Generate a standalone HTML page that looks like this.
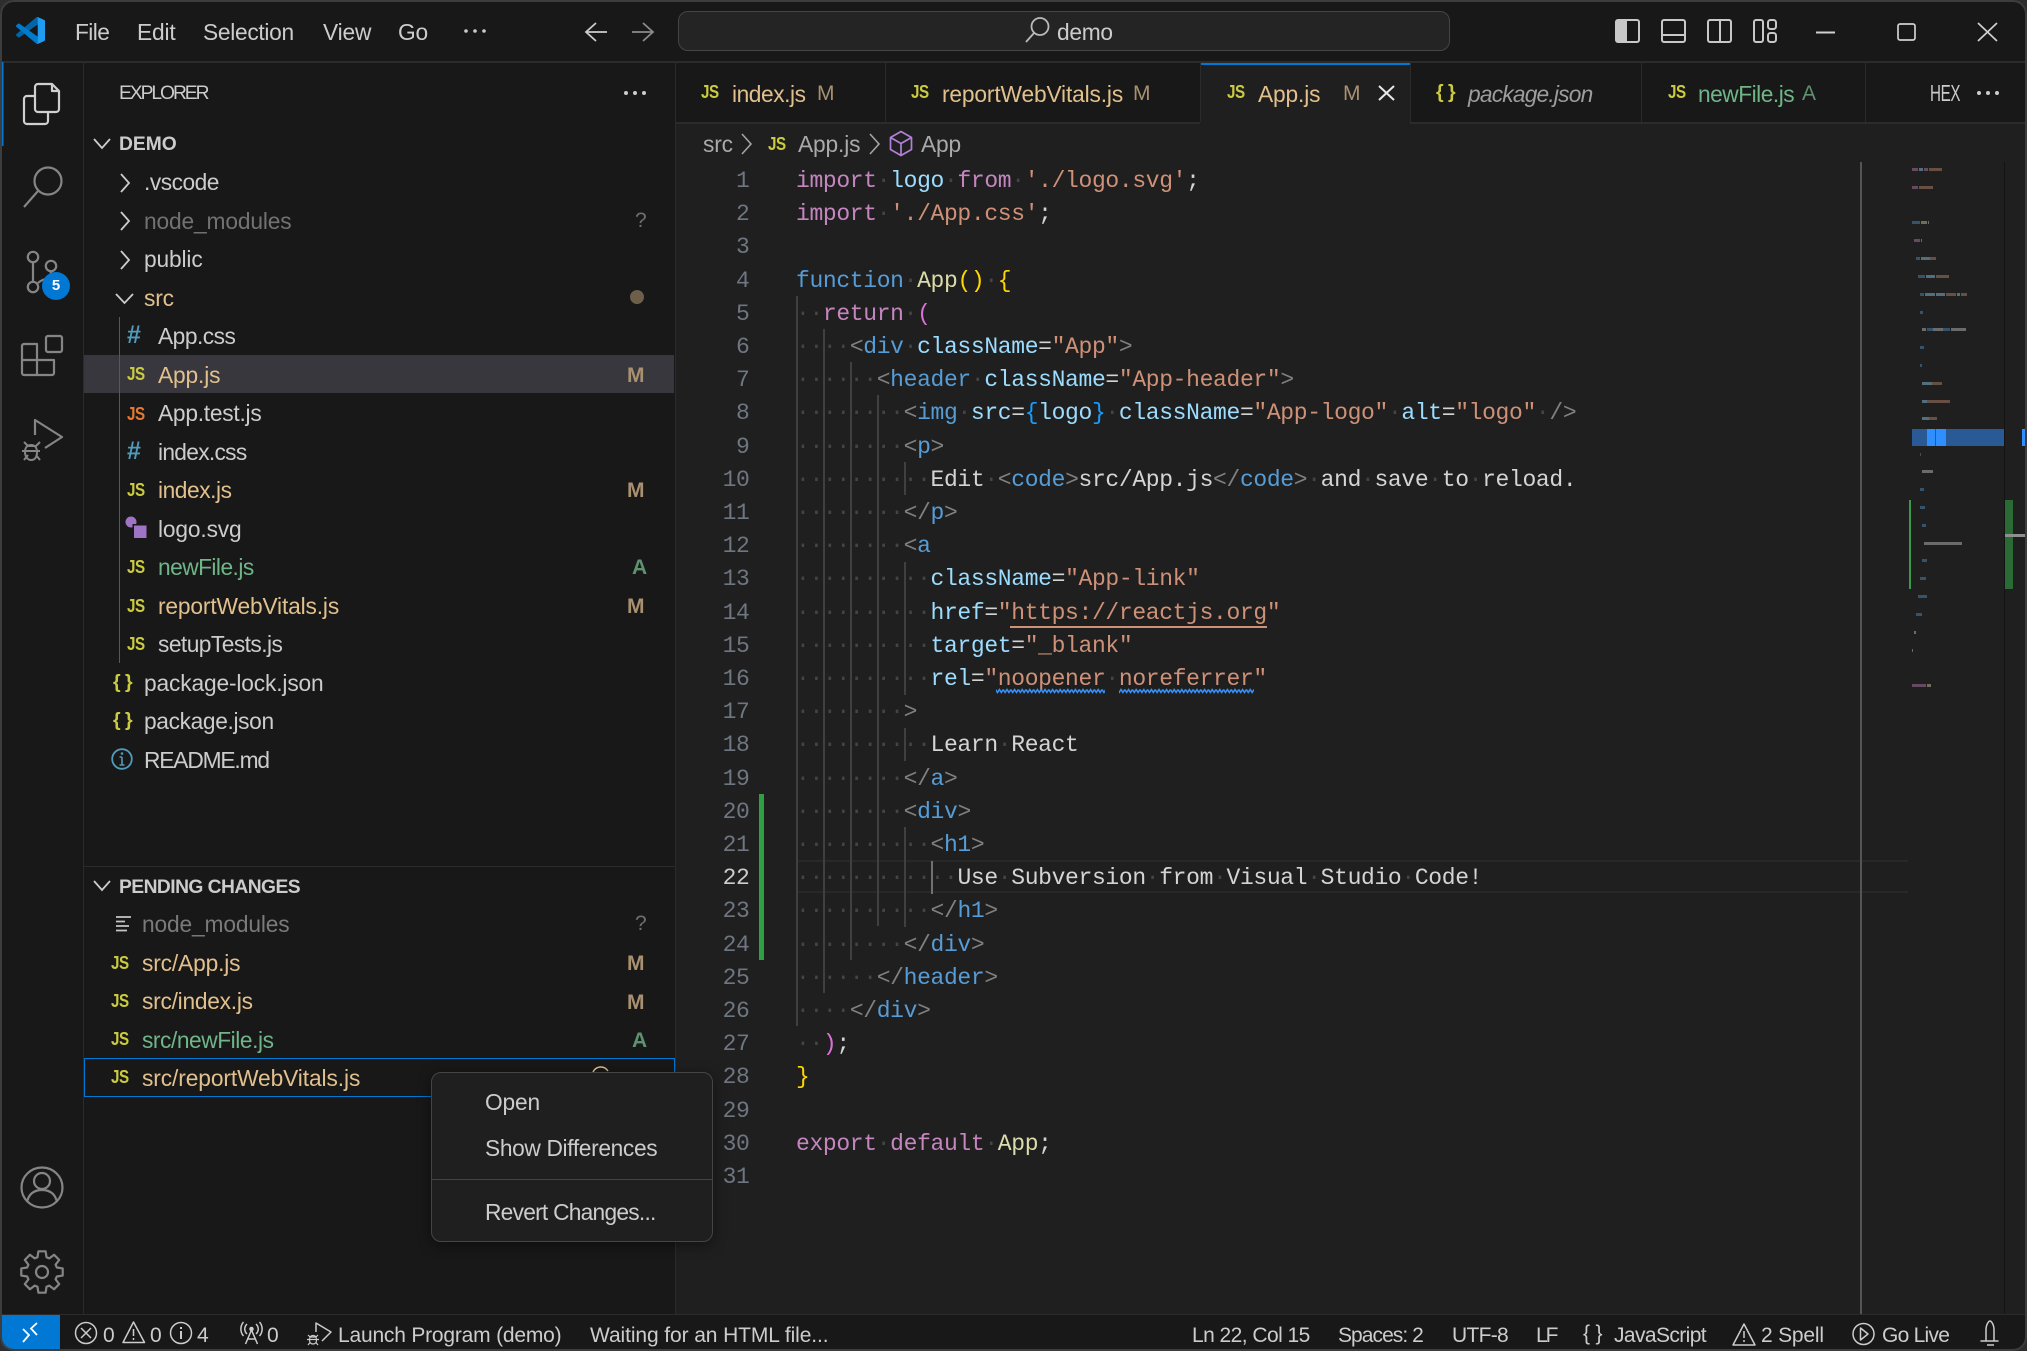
<!DOCTYPE html>
<html><head><meta charset="utf-8"><title>App.js - demo</title>
<style>
html,body{margin:0;padding:0;width:2027px;height:1351px;background:#2e2e2e;overflow:hidden}
#m{position:absolute;left:0;top:0;width:2027px;height:1351px;background:#181818;border-radius:14px;overflow:hidden;font-family:"Liberation Sans",sans-serif;color:#ccc}
#fr{position:absolute;left:0;top:0;width:2027px;height:1351px;box-sizing:border-box;border:2px solid #3d3d3d;border-radius:14px;pointer-events:none}
.b{position:absolute}
.r{position:absolute;height:38px;line-height:38px;white-space:nowrap;font-size:22.75px;letter-spacing:-.15px}
.h{font-weight:bold;font-size:19.25px;letter-spacing:0}
.js{position:absolute;height:20px;line-height:20px;font-weight:bold;font-size:18.5px;color:#cbcb41;transform:scaleX(.82);transform-origin:left center;white-space:nowrap;letter-spacing:-.5px}
.d{position:absolute;height:38px;line-height:38px;font-size:21px;font-weight:bold;color:#a89070;white-space:nowrap}
.mod{color:#e2c08d}.add{color:#73c991}.ign{color:#727272}
.st{position:absolute;top:1317px;height:38px;line-height:38px;font-size:21px;color:#ccc;white-space:nowrap;letter-spacing:-.2px}
.l{position:absolute;left:796px;height:33.2px;line-height:33.2px;font-family:"Liberation Mono",monospace;font-size:23px;letter-spacing:-.35px;white-space:pre;color:#d4d4d4}
.n{position:absolute;left:700px;width:49.5px;text-align:right;height:33.2px;line-height:33.2px;font-family:"Liberation Mono",monospace;font-size:23px;letter-spacing:-.35px;color:#6e7681}
.w{color:#444}.k{color:#c586c0}.v{color:#9cdcfe}.s{color:#ce9178}.f{color:#569cd6}.y{color:#dcdcaa}.g{color:#ffd700}.p{color:#da70d6}.t{color:#808080}.c{color:#179fff}
.ig{position:absolute;width:1.5px;background:#404040}
</style></head><body>
<div id="m">
<div class="b" style="left:55px;top:0;width:24px;height:2px;background:#bbb"></div>

<!-- editor bg -->
<div class="b" style="left:676px;top:62px;width:1351px;height:1252px;background:#1f1f1f"></div>
<!-- tabs bg -->
<div class="b" style="left:676px;top:62px;width:1351px;height:60px;background:#181818"></div>
<div class="b" style="left:1200px;top:62px;width:210px;height:62px;background:#1f1f1f"></div>
<div class="b" style="left:1200px;top:62px;width:210px;height:2.5px;background:#0078d4"></div>
<div class="b" style="left:676px;top:122px;width:524px;height:2px;background:#2b2b2b"></div>
<div class="b" style="left:1410px;top:122px;width:617px;height:2px;background:#2b2b2b"></div>
<div class="b" style="left:885px;top:62px;width:1px;height:60px;background:#2b2b2b"></div>
<div class="b" style="left:1200px;top:62px;width:1px;height:60px;background:#2b2b2b"></div>
<div class="b" style="left:1410px;top:62px;width:1px;height:60px;background:#2b2b2b"></div>
<div class="b" style="left:1641px;top:62px;width:1px;height:60px;background:#2b2b2b"></div>
<div class="b" style="left:1865px;top:62px;width:1px;height:60px;background:#2b2b2b"></div>
<!-- borders -->
<div class="b" style="left:0;top:61px;width:2027px;height:1.5px;background:#2b2b2b"></div>
<div class="b" style="left:83px;top:62px;width:1px;height:1252px;background:#2b2b2b"></div>
<div class="b" style="left:675px;top:62px;width:1px;height:1252px;background:#2b2b2b"></div>
<div class="b" style="left:0;top:1314px;width:2027px;height:1px;background:#2b2b2b"></div>
<div class="b" style="left:84px;top:866px;width:591px;height:1px;background:#2b2b2b"></div>

<!-- title bar -->
<div class="r" style="left:75px;top:13px;letter-spacing:-.6px">File</div>
<div class="r" style="left:137px;top:13px">Edit</div>
<div class="r" style="left:203px;top:13px;letter-spacing:-.3px">Selection</div>
<div class="r" style="left:323px;top:13px">View</div>
<div class="r" style="left:398px;top:13px">Go</div>
<div class="b" style="left:678px;top:11px;width:772px;height:40px;box-sizing:border-box;background:#242424;border:1px solid #454545;border-radius:10px"></div>
<div class="r" style="left:1057px;top:13px;color:#ccc;letter-spacing:-.3px">demo</div>

<!-- Sidebar -->
<div class="b" style="left:84px;top:355px;width:590px;height:38px;background:#37373d"></div>
<div class="b" style="left:119px;top:317px;width:1px;height:346px;background:#585858"></div>
<div class="r" style="left:119px;top:75px;font-size:19.25px;letter-spacing:-2.05px">EXPLORER</div>
<div class="r h" style="left:119px;top:126px">DEMO</div>
<div class="r" style="left:144px;top:163px;letter-spacing:-.5px">.vscode</div>
<div class="r ign" style="left:144px;top:202px">node_modules</div>
<div class="d" style="left:635px;top:202px;color:#6f6f6f;font-weight:normal">?</div>
<div class="r" style="left:144px;top:240px">public</div>
<div class="r mod" style="left:144px;top:279px">src</div>
<div class="b" style="left:630px;top:290px;width:14px;height:14px;border-radius:50%;background:#6e5f4b"></div>
<div class="r" style="left:158px;top:317px;letter-spacing:-.5px">App.css</div>
<div class="r mod" style="left:158px;top:356px">App.js</div>
<div class="d" style="left:627px;top:357px">M</div>
<div class="r" style="left:158px;top:394px;letter-spacing:-.25px">App.test.js</div>
<div class="r" style="left:158px;top:433px;letter-spacing:-.7px">index.css</div>
<div class="r mod" style="left:158px;top:471px;letter-spacing:-.45px">index.js</div>
<div class="d" style="left:627px;top:472px">M</div>
<div class="r" style="left:158px;top:510px">logo.svg</div>
<div class="r add" style="left:158px;top:548px;letter-spacing:-.55px;color:#6fb588">newFile.js</div>
<div class="d" style="left:632px;top:549px;color:#5f9070">A</div>
<div class="r mod" style="left:158px;top:587px">reportWebVitals.js</div>
<div class="d" style="left:627px;top:588px">M</div>
<div class="r" style="left:158px;top:625px;letter-spacing:-.55px">setupTests.js</div>
<div class="r" style="left:144px;top:664px">package-lock.json</div>
<div class="r" style="left:144px;top:702px;letter-spacing:-.36px">package.json</div>
<div class="r" style="left:144px;top:741px;letter-spacing:-1.15px">README.md</div>
<div class="js" style="left:127px;top:364px">JS</div>
<div class="js" style="left:127px;top:404px;color:#e37933">JS</div>
<div class="js" style="left:127px;top:480px">JS</div>
<div class="js" style="left:127px;top:557px">JS</div>
<div class="js" style="left:127px;top:596px">JS</div>
<div class="js" style="left:127px;top:634px">JS</div>
<div class="js" style="left:127px;top:325px;color:#519aba;font-size:25px;transform:none">#</div>
<div class="js" style="left:127px;top:441px;color:#519aba;font-size:25px;transform:none">#</div>
<div class="js" style="left:113px;top:672px;font-size:19.5px;transform:none">{ }</div>
<div class="js" style="left:113px;top:710px;font-size:19.5px;transform:none">{ }</div>

<div class="r h" style="left:119px;top:869px;letter-spacing:-.55px">PENDING CHANGES</div>
<div class="r ign" style="left:142px;top:905px;color:#7a7a7a">node_modules</div>
<div class="d" style="left:635px;top:905px;color:#6f6f6f;font-weight:normal">?</div>
<div class="r mod" style="left:142px;top:944px">src/App.js</div>
<div class="d" style="left:627px;top:945px">M</div>
<div class="r mod" style="left:142px;top:982px;letter-spacing:-.25px">src/index.js</div>
<div class="d" style="left:627px;top:984px">M</div>
<div class="r add" style="left:142px;top:1021px;letter-spacing:-.45px;color:#6fb588">src/newFile.js</div>
<div class="d" style="left:632px;top:1022px;color:#5f9070">A</div>
<div class="b" style="left:84px;top:1058px;width:591px;height:39px;box-sizing:border-box;border:1.5px solid #0078d4"></div>
<div class="r mod" style="left:142px;top:1059px;letter-spacing:-.1px">src/reportWebVitals.js</div>
<div class="js" style="left:111px;top:953px">JS</div>
<div class="js" style="left:111px;top:991px">JS</div>
<div class="js" style="left:111px;top:1029px">JS</div>
<div class="js" style="left:111px;top:1067px">JS</div>

<!-- Tabs -->
<div class="js" style="left:701px;top:82px">JS</div>
<div class="r mod" style="left:732px;top:75px;letter-spacing:-.45px">index.js</div>
<div class="d" style="left:817px;top:75px;font-weight:normal">M</div>
<div class="js" style="left:911px;top:82px">JS</div>
<div class="r mod" style="left:942px;top:75px">reportWebVitals.js</div>
<div class="d" style="left:1133px;top:75px;font-weight:normal">M</div>
<div class="js" style="left:1227px;top:82px">JS</div>
<div class="r mod" style="left:1258px;top:75px">App.js</div>
<div class="d" style="left:1343px;top:75px;font-weight:normal">M</div>
<div class="js" style="left:1436px;top:82px;font-size:19.5px;transform:none">{ }</div>
<div class="r" style="left:1468px;top:75px;font-style:italic;color:#9d9d9d;letter-spacing:-.8px">package.json</div>
<div class="js" style="left:1668px;top:82px">JS</div>
<div class="r add" style="left:1698px;top:75px;letter-spacing:-.5px;color:#6fb588">newFile.js</div>
<div class="d" style="left:1802px;top:75px;font-weight:normal;color:#5f9070">A</div>
<div class="r" style="left:1930px;top:74px;font-size:23px;letter-spacing:-.5px;color:#ccc;transform:scaleX(.66);transform-origin:left center">HEX</div>

<!-- Breadcrumb -->
<div class="r" style="left:703px;top:125px;color:#a9a9a9">src</div>
<div class="js" style="left:768px;top:134px">JS</div>
<div class="r" style="left:798px;top:125px;color:#a9a9a9">App.js</div>
<div class="r" style="left:921px;top:125px;color:#a9a9a9">App</div>

<!-- Editor: current line -->
<div class="b" style="left:796px;top:860px;width:1112px;height:33px;box-sizing:border-box;border-top:2px solid #282828;border-bottom:2px solid #282828"></div>

<!-- Indent guides -->
<div class="ig" style="left:796px;top:296px;height:730px"></div>
<div class="ig" style="left:823px;top:329px;height:664px"></div>
<div class="ig" style="left:850px;top:362px;height:598px"></div>
<div class="ig" style="left:877px;top:395px;height:531px"></div>
<div class="ig" style="left:904px;top:462px;height:33px"></div>
<div class="ig" style="left:904px;top:562px;height:133px"></div>
<div class="ig" style="left:904px;top:728px;height:33px"></div>
<div class="ig" style="left:904px;top:827px;height:100px"></div>
<div class="ig" style="left:931px;top:861px;height:33px;background:#707070"></div>
<div class="b" style="left:759px;top:794px;width:4.5px;height:166px;background:#2ea043"></div>

<div class="b" style="left:0;top:1.6px;width:2027px;height:1200px">
<!-- line numbers -->
<div class="n" style="top:163.4px">1</div><div class="n" style="top:196.6px">2</div><div class="n" style="top:229.8px">3</div><div class="n" style="top:263px">4</div><div class="n" style="top:296.2px">5</div><div class="n" style="top:329.4px">6</div><div class="n" style="top:362.6px">7</div><div class="n" style="top:395.8px">8</div><div class="n" style="top:429px">9</div><div class="n" style="top:462.2px">10</div><div class="n" style="top:495.4px">11</div><div class="n" style="top:528.6px">12</div><div class="n" style="top:561.8px">13</div><div class="n" style="top:595px">14</div><div class="n" style="top:628.2px">15</div><div class="n" style="top:661.4px">16</div><div class="n" style="top:694.6px">17</div><div class="n" style="top:727.8px">18</div><div class="n" style="top:761px">19</div><div class="n" style="top:794.2px">20</div><div class="n" style="top:827.4px">21</div><div class="n" style="top:860.6px;color:#ccc">22</div><div class="n" style="top:893.8px">23</div><div class="n" style="top:927px">24</div><div class="n" style="top:960.2px">25</div><div class="n" style="top:993.4px">26</div><div class="n" style="top:1026.6px">27</div><div class="n" style="top:1059.8px">28</div><div class="n" style="top:1093px">29</div><div class="n" style="top:1126.2px">30</div><div class="n" style="top:1159.8px">31</div>

<!-- code -->
<div class="l" style="top:163.4px"><span class="k">import</span><span class="w">·</span><span class="v">logo</span><span class="w">·</span><span class="k">from</span><span class="w">·</span><span class="s">'./logo.svg'</span>;</div>
<div class="l" style="top:196.6px"><span class="k">import</span><span class="w">·</span><span class="s">'./App.css'</span>;</div>
<div class="l" style="top:263px"><span class="f">function</span><span class="w">·</span><span class="y">App</span><span class="g">()</span><span class="w">·</span><span class="g">{</span></div>
<div class="l" style="top:296.2px"><span class="w">··</span><span class="k">return</span><span class="w">·</span><span class="p">(</span></div>
<div class="l" style="top:329.4px"><span class="w">····</span><span class="t">&lt;</span><span class="f">div</span><span class="w">·</span><span class="v">className</span>=<span class="s">"App"</span><span class="t">&gt;</span></div>
<div class="l" style="top:362.6px"><span class="w">······</span><span class="t">&lt;</span><span class="f">header</span><span class="w">·</span><span class="v">className</span>=<span class="s">"App-header"</span><span class="t">&gt;</span></div>
<div class="l" style="top:395.8px"><span class="w">········</span><span class="t">&lt;</span><span class="f">img</span><span class="w">·</span><span class="v">src</span>=<span class="c">{</span><span class="v">logo</span><span class="c">}</span><span class="w">·</span><span class="v">className</span>=<span class="s">"App-logo"</span><span class="w">·</span><span class="v">alt</span>=<span class="s">"logo"</span><span class="w">·</span><span class="t">/&gt;</span></div>
<div class="l" style="top:429px"><span class="w">········</span><span class="t">&lt;</span><span class="f">p</span><span class="t">&gt;</span></div>
<div class="l" style="top:462.2px"><span class="w">··········</span>Edit<span class="w">·</span><span class="t">&lt;</span><span class="f">code</span><span class="t">&gt;</span>src/App.js<span class="t">&lt;/</span><span class="f">code</span><span class="t">&gt;</span><span class="w">·</span>and<span class="w">·</span>save<span class="w">·</span>to<span class="w">·</span>reload.</div>
<div class="l" style="top:495.4px"><span class="w">········</span><span class="t">&lt;/</span><span class="f">p</span><span class="t">&gt;</span></div>
<div class="l" style="top:528.6px"><span class="w">········</span><span class="t">&lt;</span><span class="f">a</span></div>
<div class="l" style="top:561.8px"><span class="w">··········</span><span class="v">className</span>=<span class="s">"App-link"</span></div>
<div class="l" style="top:595px"><span class="w">··········</span><span class="v">href</span>=<span class="s">"https://reactjs.org"</span></div>
<div class="l" style="top:628.2px"><span class="w">··········</span><span class="v">target</span>=<span class="s">"_blank"</span></div>
<div class="l" style="top:661.4px"><span class="w">··········</span><span class="v">rel</span>=<span class="s">"noopener</span><span class="w">·</span><span class="s">noreferrer"</span></div>
<div class="l" style="top:694.6px"><span class="w">········</span><span class="t">&gt;</span></div>
<div class="l" style="top:727.8px"><span class="w">··········</span>Learn<span class="w">·</span>React</div>
<div class="l" style="top:761px"><span class="w">········</span><span class="t">&lt;/</span><span class="f">a</span><span class="t">&gt;</span></div>
<div class="l" style="top:794.2px"><span class="w">········</span><span class="t">&lt;</span><span class="f">div</span><span class="t">&gt;</span></div>
<div class="l" style="top:827.4px"><span class="w">··········</span><span class="t">&lt;</span><span class="f">h1</span><span class="t">&gt;</span></div>
<div class="l" style="top:860.6px"><span class="w">············</span>Use<span class="w">·</span>Subversion<span class="w">·</span>from<span class="w">·</span>Visual<span class="w">·</span>Studio<span class="w">·</span>Code!</div>
<div class="l" style="top:893.8px"><span class="w">··········</span><span class="t">&lt;/</span><span class="f">h1</span><span class="t">&gt;</span></div>
<div class="l" style="top:927px"><span class="w">········</span><span class="t">&lt;/</span><span class="f">div</span><span class="t">&gt;</span></div>
<div class="l" style="top:960.2px"><span class="w">······</span><span class="t">&lt;/</span><span class="f">header</span><span class="t">&gt;</span></div>
<div class="l" style="top:993.4px"><span class="w">····</span><span class="t">&lt;/</span><span class="f">div</span><span class="t">&gt;</span></div>
<div class="l" style="top:1026.6px"><span class="w">··</span><span class="p">)</span>;</div>
<div class="l" style="top:1059.8px"><span class="g">}</span></div>
<div class="l" style="top:1126.2px"><span class="k">export</span><span class="w">·</span><span class="k">default</span><span class="w">·</span><span class="y">App</span>;</div>
</div>
<div class="b" style="left:1010px;top:626px;width:257px;height:2px;background:#ce9178"></div>

<!-- Overview & minimap chrome -->
<div class="b" style="left:1860px;top:162px;width:2px;height:1152px;background:#555"></div>
<div class="b" style="left:2004px;top:162px;width:1px;height:1152px;background:#131313"></div>
<div class="b" style="left:1912px;top:429px;width:92px;height:17px;background:#2a5a96"></div>
<div class="b" style="left:1927px;top:429px;width:8px;height:17px;background:#2f8fff"></div>
<div class="b" style="left:1936px;top:429px;width:10px;height:17px;background:#2f8fff"></div>
<div class="b" style="left:2022px;top:429px;width:4px;height:17px;background:#2f8fff"></div>
<div class="b" style="left:2005px;top:500px;width:8px;height:89px;background:#2a6b35"></div>
<div class="b" style="left:2005px;top:534px;width:21px;height:3px;background:#8f8f8f"></div>
<div class="b" style="left:1909px;top:500px;width:1.5px;height:89px;background:#3a9a4a"></div>

<!-- Minimap -->
<svg class="b" style="left:1912px;top:168px" width="92" height="520" viewBox="0 0 92 520">
<g opacity=".42" shape-rendering="crispEdges">
<g fill="#c586c0"><rect x="0" y="0" width="6" height="3"/><rect x="12" y="0" width="4" height="3"/><rect x="0" y="18" width="6" height="3"/><rect x="2" y="71" width="6" height="3"/><rect x="0" y="516" width="14" height="3"/></g>
<g fill="#9cdcfe"><rect x="7" y="0" width="4" height="3"/><rect x="9" y="89" width="9" height="3"/><rect x="14" y="107" width="9" height="3"/><rect x="13" y="125" width="10" height="3"/><rect x="24" y="125" width="9" height="3"/><rect x="45" y="125" width="3" height="3"/><rect x="10" y="214" width="10" height="3"/><rect x="10" y="232" width="5" height="3"/><rect x="10" y="249" width="7" height="3"/></g>
<g fill="#ce9178"><rect x="17" y="0" width="13" height="3"/><rect x="7" y="18" width="14" height="3"/><rect x="18" y="89" width="6" height="3"/><rect x="24" y="107" width="13" height="3"/><rect x="34" y="125" width="10" height="3"/><rect x="49" y="125" width="6" height="3"/><rect x="20" y="214" width="10" height="3"/><rect x="15" y="232" width="23" height="3"/><rect x="17" y="249" width="8" height="3"/></g>
<g fill="#569cd6"><rect x="0" y="53" width="8" height="3"/><rect x="4" y="89" width="4" height="3"/><rect x="6" y="107" width="7" height="3"/><rect x="8" y="125" width="4" height="3"/><rect x="8" y="143" width="3" height="3"/><rect x="15" y="160" width="6" height="3"/><rect x="31" y="160" width="7" height="3"/><rect x="8" y="178" width="4" height="3"/><rect x="8" y="196" width="2" height="3"/><rect x="8" y="320" width="4" height="3"/><rect x="8" y="338" width="5" height="3"/><rect x="10" y="356" width="4" height="3"/><rect x="10" y="391" width="5" height="3"/><rect x="8" y="409" width="6" height="3"/><rect x="6" y="427" width="9" height="3"/><rect x="4" y="445" width="6" height="3"/></g>
<g fill="#dcdcaa"><rect x="9" y="53" width="6" height="3"/><rect x="15" y="516" width="4" height="3"/></g>
<g fill="#d4d4d4"><rect x="16" y="53" width="1" height="3"/><rect x="9" y="71" width="1" height="3"/><rect x="10" y="160" width="4" height="3"/><rect x="21" y="160" width="10" height="3"/><rect x="39" y="160" width="15" height="3"/><rect x="10" y="302" width="11" height="3"/><rect x="12" y="374" width="38" height="3"/><rect x="2" y="463" width="2" height="3"/><rect x="0" y="481" width="1" height="3"/></g>
<rect x="8" y="285" width="1" height="3" fill="#888"/>
</g>
</svg>

<!-- Icons -->
<svg class="b" style="left:0;top:0" width="2027" height="1351" viewBox="0 0 2027 1351" fill="none">
<defs><pattern id="sq" width="7.6" height="6" patternUnits="userSpaceOnUse" y="688"><path d="M0 1.500 L1.900 4.500 L3.800 1.500 L5.700 4.500 L7.600 1.500" stroke="#3794ff" stroke-width="1.500" fill="none"/></pattern></defs>
<rect x="996" y="688" width="109" height="6" fill="url(#sq)"/>
<rect x="1119" y="688" width="135" height="6" fill="url(#sq)"/>
<!-- logo -->
<g transform="translate(16,17) scale(.29,.27)">
<path fill="#0065a9" d="M96.5 10.8L75.9.9C73.5-.3 70.7.2 68.8 2.1L1.4 63.5C-.4 65.2-.4 68 1.4 69.7L6.9 74.7C8.4 76 10.6 76.1 12.2 74.9L93.3 13.4C96 11.3 100 13.3 100 16.7V16.4C100 14 98.6 11.8 96.5 10.8Z"/>
<path fill="#007acc" d="M96.5 89.2L75.9 99.1C73.5 100.3 70.7 99.8 68.8 97.9L1.4 36.5C-.4 34.8-.4 32 1.4 30.3L6.9 25.3C8.4 24 10.6 23.9 12.2 25.1L93.3 86.6C96 88.7 100 86.7 100 83.3V83.6C100 86 98.6 88.2 96.5 89.2Z"/>
<path fill="#1f9cf0" d="M75.9 99.1C73.5 100.3 70.7 99.8 68.8 97.9C71.1 100.2 75 98.6 75 95.3V4.7C75 1.4 71.1-.2 68.8 2.1C70.7.2 73.5-.3 75.9.9L96.5 10.8C98.6 11.8 100 14 100 16.4V83.6C100 86 98.6 88.2 96.5 89.2Z"/>
</g>
<!-- title dots -->
<g fill="#ccc"><circle cx="466" cy="31" r="1.8"/><circle cx="475" cy="31" r="1.8"/><circle cx="484" cy="31" r="1.8"/>
<circle cx="626" cy="93" r="2"/><circle cx="635" cy="93" r="2"/><circle cx="644" cy="93" r="2"/>
<circle cx="1979" cy="93" r="2"/><circle cx="1988" cy="93" r="2"/><circle cx="1997" cy="93" r="2"/></g>
<!-- arrows -->
<path d="M607 32H586M596 23L586 32L596 41" stroke="#ccc" stroke-width="1.8"/>
<path d="M632 32H653M643 23L653 32L643 41" stroke="#8a8a8a" stroke-width="1.8"/>
<!-- title search -->
<circle cx="1040" cy="26.5" r="8.5" stroke="#bbb" stroke-width="1.8"/>
<path d="M1034 33L1026 42" stroke="#bbb" stroke-width="1.8"/>
<!-- layout icons -->
<g stroke="#c8c8c8" stroke-width="2">
<rect x="1616" y="20" width="23" height="22" rx="2"/>
<rect x="1662" y="20" width="23" height="22" rx="2"/><path d="M1662 35H1685"/>
<rect x="1708" y="20" width="23" height="22" rx="2"/><path d="M1720 20V42"/>
<rect x="1754" y="20" width="9" height="22" rx="2"/><rect x="1768" y="20" width="8" height="9" rx="2.5"/><rect x="1768" y="33" width="8" height="9" rx="2.5"/>
</g>
<rect x="1616" y="20" width="11" height="22" fill="#c8c8c8"/>
<!-- window controls -->
<g stroke="#d0d0d0" stroke-width="1.7">
<path d="M1816 32.5H1835" stroke-width="2"/>
<rect x="1898" y="24" width="17" height="16" rx="2"/>
<path d="M1978 23L1997 41M1997 23L1978 41"/>
</g>
<!-- tab close -->
<path d="M1379 86L1394 100M1394 86L1379 100" stroke="#e8e8e8" stroke-width="2"/>
<!-- activity -->
<rect x="2" y="62" width="1.5" height="84" fill="#0078d4"/>
<g stroke="#d0d0d0" stroke-width="2.2" stroke-linejoin="round">
<path d="M38 84H52L59 91V109a3 3 0 0 1-3 3H38a3 3 0 0 1-3-3V87a3 3 0 0 1 3-3Z"/>
<path d="M52 84V91H59"/>
<path d="M35 96H27a3 3 0 0 0-3 3V121a3 3 0 0 0 3 3H45a3 3 0 0 0 3-3V112"/>
</g>
<g stroke="#858585" stroke-width="2.2" stroke-linejoin="round">
<circle cx="48" cy="181" r="13.5"/><path d="M38 191L24 207"/>
<circle cx="33" cy="257" r="5.2"/><circle cx="51" cy="266" r="5.2"/><circle cx="33" cy="287" r="5.2"/>
<path d="M33 262V282M38 283C44 277 51 281 51 271"/>
<rect x="46" y="336" width="16" height="16" rx="2"/>
<path d="M37 344H24a2 2 0 0 0-2 2V373a2 2 0 0 0 2 2H52a2 2 0 0 0 2-2V360H37ZM37 360V375M22 360H37"/>
<path d="M35 435V420L62 437L45 448"/>
<path d="M24 442L28 446H36L40 442M22 451H40M24 460L28 455M40 460L36 455M31 445C26 445 25 449 25 452C25 457 28 460 31 460C35 460 37 457 37 452C37 449 36 445 31 445Z" stroke-width="2"/>
<ellipse cx="42" cy="1187.5" rx="20.5" ry="20"/>
<circle cx="42" cy="1181" r="8"/>
<path d="M27 1202C29 1193 35 1190 42 1190C49 1190 55 1193 57 1202"/>
<g transform="translate(42,1272)"><polygon points="14.8,4.5 13.6,7.3 17.2,12.1 12.1,17.2 7.3,13.6 4.5,14.8 3.6,20.7 -3.6,20.7 -4.5,14.8 -7.3,13.6 -12.1,17.2 -17.2,12.1 -13.6,7.3 -14.8,4.5 -20.7,3.6 -20.7,-3.6 -14.8,-4.5 -13.6,-7.3 -17.2,-12.1 -12.1,-17.2 -7.3,-13.6 -4.5,-14.8 -3.6,-20.7 3.6,-20.7 4.5,-14.8 7.3,-13.6 12.1,-17.2 17.2,-12.1 13.6,-7.3 14.8,-4.5 20.7,-3.6 20.7,3.6"/><circle r="6"/></g>
</g>
<circle cx="56" cy="286" r="14" fill="#0078d4"/>
<!-- chevrons sidebar -->
<g stroke="#ccc" stroke-width="1.8">
<path d="M94 139L102 148L110 139"/>
<path d="M94 881L102 890L110 881"/>
<path d="M121 174L129 183L121 192"/>
<path d="M121 212L129 221L121 230"/>
<path d="M121 251L129 260L121 269"/>
<path d="M116 294L124.500 303L133 294"/>
</g>
<!-- logo.svg icon -->
<circle cx="131" cy="522" r="5.5" fill="#a074c4"/>
<rect x="132.500" y="524" width="14" height="15" fill="#181818"/>
<rect x="134" y="525.500" width="12.500" height="12.500" fill="#a074c4"/>
<!-- info -->
<circle cx="122" cy="759" r="9.800" stroke="#519aba" stroke-width="1.800"/>
<path d="M122 757V765M119.500 757H122M119.500 765H124.500" stroke="#519aba" stroke-width="1.600"/>
<circle cx="122" cy="753.500" r="1.300" fill="#519aba"/>
<!-- list icon -->
<path d="M116 917H131M116 921.500H125M116 926H129M116 930.500H127" stroke="#c5c5c5" stroke-width="1.800"/>
<!-- breadcrumb -->
<path d="M742 134L751 144L742 154M870 134L879 144L870 154" stroke="#a9a9a9" stroke-width="1.500"/>
<path d="M901 131.500L911.500 137.500V149.500L901 155.500L890.500 149.500V137.500ZM890.500 137.500L901 143.500L911.500 137.500M901 143.500V155.500" stroke="#b180d7" stroke-width="1.700" stroke-linejoin="round"/>
<!-- undo sliver -->
<path d="M593 1072C596 1066 604 1065 608 1071" stroke="#e2c08d" stroke-width="1.500"/>
<!-- status icons -->
<rect x="2" y="1315" width="58" height="34" fill="#0078d4"/>
<path d="M23 1329L29 1335L23 1342M37 1323L31 1328.500L37 1335" stroke="#fff" stroke-width="1.800"/>
<g stroke="#ccc" stroke-width="1.500" stroke-linejoin="round">
<circle cx="86" cy="1333" r="10.500"/><path d="M81 1328L91 1338M91 1328L81 1338"/>
<path d="M133.500 1322L144.500 1342.500H123Z"/><path d="M133.500 1329V1336M133.500 1338V1340"/>
<circle cx="181" cy="1333" r="10.500"/><path d="M181 1331V1339M181 1327V1329" stroke-width="2"/>
<path d="M251.500 1330L245.500 1344M251.500 1330L257.500 1344M247.500 1339H255.500M247 1324C244 1327 244 1331 247 1334M256 1324C259 1327 259 1331 256 1334M243.500 1322C240 1326 240 1332 243.500 1336M259.500 1322C263 1326 263 1332 259.500 1336"/>
<circle cx="251.500" cy="1329" r="1.500" fill="#ccc"/>
<path d="M316 1332V1323L331 1332L322 1341"/>
<path d="M308 1335L310 1337H316L318 1335M307 1339.500H319M308 1345L310 1342.500M318 1345L316 1342.500M313 1335.500C310 1335.500 309.500 1338 309.500 1340C309.500 1342.500 311 1344 313 1344C315 1344 316.500 1342.500 316.500 1340C316.500 1338 316 1335.500 313 1335.500Z" stroke-width="1.200"/>
<path d="M1744 1324L1755 1345H1733Z"/><path d="M1744 1331V1338M1744 1340V1342"/>
<ellipse cx="1863.500" cy="1334" rx="10.500" ry="10.500"/><path d="M1860.500 1328L1868 1334L1860.500 1340Z"/>
<path d="M1986 1342V1331C1986 1325 1989 1322 1990 1322C1991 1322 1994 1325 1994 1331V1342H1998L1981 1342H1986M1987 1346H1994" transform="translate(0,-1)"/>
</g>
</svg>
<div class="b" style="left:43px;top:275px;width:26px;height:22px;line-height:22px;text-align:center;color:#fff;font-weight:bold;font-size:15px">5</div>

<!-- Status text -->
<div class="st" style="left:103px">0</div>
<div class="st" style="left:150px">0</div>
<div class="st" style="left:197px">4</div>
<div class="st" style="left:267px">0</div>
<div class="st" style="left:338px">Launch Program (demo)</div>
<div class="st" style="left:590px;letter-spacing:-.1px">Waiting for an HTML file...</div>
<div class="st" style="left:1192px;letter-spacing:-.55px">Ln 22, Col 15</div>
<div class="st" style="left:1338px;letter-spacing:-.95px">Spaces: 2</div>
<div class="st" style="left:1452px;letter-spacing:-.7px">UTF-8</div>
<div class="st" style="left:1536px;letter-spacing:-2px">LF</div>
<div class="st" style="left:1583px;top:1315px">{ }</div>
<div class="st" style="left:1614px;letter-spacing:-.6px">JavaScript</div>
<div class="st" style="left:1761px">2 Spell</div>
<div class="st" style="left:1882px;letter-spacing:-.75px">Go Live</div>

<!-- Context menu -->
<div class="b" style="left:431px;top:1072px;width:282px;height:170px;box-sizing:border-box;background:#1f1f1f;border:1px solid #454545;border-radius:10px;box-shadow:0 3px 14px rgba(0,0,0,.45)"></div>
<div class="b" style="left:432px;top:1179px;width:280px;height:1px;background:#454545"></div>
<div class="r" style="left:485px;top:1083px">Open</div>
<div class="r" style="left:485px;top:1129px;letter-spacing:-.35px">Show Differences</div>
<div class="r" style="left:485px;top:1193px;letter-spacing:-.75px">Revert Changes...</div>
</div>
<div id="fr"></div>
</body></html>
